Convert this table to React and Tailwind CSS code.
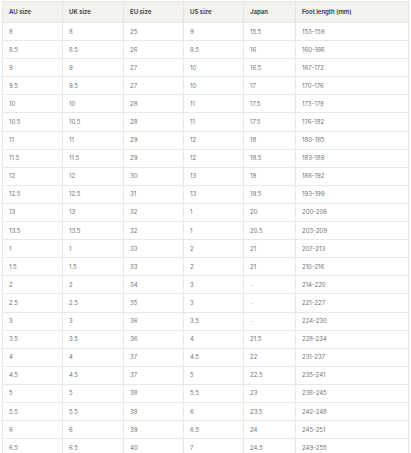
import React from "react";

const rows = [
  ["8", "8", "25", "9", "15.5", "153-159"],
  ["8.5", "8.5", "26", "9.5", "16", "160-166"],
  ["9", "9", "27", "10", "16.5", "167-172"],
  ["9.5", "9.5", "27", "10", "17", "170-176"],
  ["10", "10", "28", "11", "17.5", "173-179"],
  ["10.5", "10.5", "28", "11", "17.5", "176-182"],
  ["11", "11", "29", "12", "18", "180-185"],
  ["11.5", "11.5", "29", "12", "18.5", "183-189"],
  ["12", "12", "30", "13", "19", "186-192"],
  ["12.5", "12.5", "31", "13", "19.5", "193-199"],
  ["13", "13", "32", "1", "20", "200-206"],
  ["13.5", "13.5", "32", "1", "20.5", "203-209"],
  ["1", "1", "33", "2", "21", "207-213"],
  ["1.5", "1.5", "33", "2", "21", "210-216"],
  ["2", "2", "34", "3", "-", "214-220"],
  ["2.5", "2.5", "35", "3", "-", "221-227"],
  ["3", "3", "36", "3.5", "-", "224-230"],
  ["3.5", "3.5", "36", "4", "21.5", "228-234"],
  ["4", "4", "37", "4.5", "22", "231-237"],
  ["4.5", "4.5", "37", "5", "22.5", "235-241"],
  ["5", "5", "38", "5.5", "23", "238-245"],
  ["5.5", "5.5", "38", "6", "23.5", "242-248"],
  ["6", "6", "39", "6.5", "24", "245-251"],
  ["6.5", "6.5", "40", "7", "24.5", "249-255"],
];

const headers = ["AU size", "UK size", "EU size", "US size", "Japan", "Foot length (mm)"];
const widths = ["w-[60px]", "w-[61px]", "w-[60px]", "w-[60px]", "w-[52px]", "w-[113px]"];

export default function App() {
  return (
    <div className="w-[411px] h-[453px] overflow-hidden bg-white pl-[2px] pt-[1px] font-['Inter',sans-serif]">
      <table className="w-[406px] table-fixed border-collapse text-[6px] leading-none">
        <thead>
          <tr className="h-[21px] bg-[#f3f2ef]">
            {headers.map((h, i) => (
              <th
                key={h}
                className={`${widths[i]} border border-[#e6e4e1] pl-[6px] text-left font-semibold text-[#333333]`}
              >
                {h}
              </th>
            ))}
          </tr>
        </thead>
        <tbody>
          {rows.map((r, ri) => (
            <tr key={ri} className="h-[18.1px]">
              {r.map((c, ci) => (
                <td
                  key={ci}
                  className={`border border-[#e8e8e8] pl-[6px] ${c === "-" ? "text-[#b5b5b5]" : "text-[#737373]"}`}
                >
                  {c}
                </td>
              ))}
            </tr>
          ))}
        </tbody>
      </table>
    </div>
  );
}
